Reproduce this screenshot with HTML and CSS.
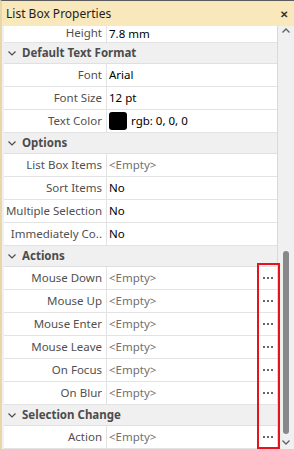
FILE: index.html
```html
<!DOCTYPE html>
<html lang="en">
<head>
  <meta charset="UTF-8">
  <title>List Box Properties</title>
  <link rel="stylesheet" href="styles.css">
</head>
<body>
  <div class="panel">
    <div class="titlebar">
      <span class="title">List Box Properties</span>
      <span class="close">&#x2715;</span>
    </div>
    <div class="body">
      <div class="grid">
        <div class="row first">
          <div class="name">Height</div>
          <div class="value">7.8 mm</div>
        </div>

        <div class="cat"><svg class="chev" width="8" height="5" viewBox="0 0 8 5"><path d="M0.5 0.5 L4 4 L7.5 0.5" /></svg>Default Text Format</div>
        <div class="row">
          <div class="name">Font</div>
          <div class="value">Arial</div>
        </div>
        <div class="row">
          <div class="name">Font Size</div>
          <div class="value">12 pt</div>
        </div>
        <div class="row">
          <div class="name">Text Color</div>
          <div class="value"><span class="swatch"></span>rgb: 0, 0, 0</div>
        </div>

        <div class="cat"><svg class="chev" width="8" height="5" viewBox="0 0 8 5"><path d="M0.5 0.5 L4 4 L7.5 0.5" /></svg>Options</div>
        <div class="row">
          <div class="name">List Box Items</div>
          <div class="value empty">&lt;Empty&gt;</div>
        </div>
        <div class="row">
          <div class="name">Sort Items</div>
          <div class="value">No</div>
        </div>
        <div class="row">
          <div class="name">Multiple Selection</div>
          <div class="value">No</div>
        </div>
        <div class="row">
          <div class="name">Immediately Co..</div>
          <div class="value">No</div>
        </div>

        <div class="cat"><svg class="chev" width="8" height="5" viewBox="0 0 8 5"><path d="M0.5 0.5 L4 4 L7.5 0.5" /></svg>Actions</div>
        <div class="row">
          <div class="name">Mouse Down</div>
          <div class="value empty">&lt;Empty&gt;</div>
          <div class="btn"><svg width="10" height="2"><rect x="0" width="2" height="2"/><rect x="4" width="2" height="2"/><rect x="8" width="2" height="2"/></svg></div>
        </div>
        <div class="row">
          <div class="name">Mouse Up</div>
          <div class="value empty">&lt;Empty&gt;</div>
          <div class="btn"><svg width="10" height="2"><rect x="0" width="2" height="2"/><rect x="4" width="2" height="2"/><rect x="8" width="2" height="2"/></svg></div>
        </div>
        <div class="row">
          <div class="name">Mouse Enter</div>
          <div class="value empty">&lt;Empty&gt;</div>
          <div class="btn"><svg width="10" height="2"><rect x="0" width="2" height="2"/><rect x="4" width="2" height="2"/><rect x="8" width="2" height="2"/></svg></div>
        </div>
        <div class="row">
          <div class="name">Mouse Leave</div>
          <div class="value empty">&lt;Empty&gt;</div>
          <div class="btn"><svg width="10" height="2"><rect x="0" width="2" height="2"/><rect x="4" width="2" height="2"/><rect x="8" width="2" height="2"/></svg></div>
        </div>
        <div class="row">
          <div class="name">On Focus</div>
          <div class="value empty">&lt;Empty&gt;</div>
          <div class="btn"><svg width="10" height="2"><rect x="0" width="2" height="2"/><rect x="4" width="2" height="2"/><rect x="8" width="2" height="2"/></svg></div>
        </div>
        <div class="row">
          <div class="name">On Blur</div>
          <div class="value empty">&lt;Empty&gt;</div>
          <div class="btn"><svg width="10" height="2"><rect x="0" width="2" height="2"/><rect x="4" width="2" height="2"/><rect x="8" width="2" height="2"/></svg></div>
        </div>

        <div class="cat"><svg class="chev" width="8" height="5" viewBox="0 0 8 5"><path d="M0.5 0.5 L4 4 L7.5 0.5" /></svg>Selection Change</div>
        <div class="row">
          <div class="name">Action</div>
          <div class="value empty">&lt;Empty&gt;</div>
          <div class="btn"><svg width="10" height="2"><rect x="0" width="2" height="2"/><rect x="4" width="2" height="2"/><rect x="8" width="2" height="2"/></svg></div>
        </div>
      </div>
      <div class="scrollbar">
        <svg class="arrow" width="8" height="5" viewBox="0 0 8 5"><path d="M0.5 4.5 L4 1 L7.5 4.5" /></svg>
        <div class="track"><div class="thumb"></div></div>
        <svg class="arrow" width="8" height="5" viewBox="0 0 8 5"><path d="M0.5 0.5 L4 4 L7.5 0.5" /></svg>
      </div>
    </div>
    <div class="highlight"></div>
  </div>
</body>
</html>
```

FILE: styles.css
```css
body {
  margin: 0;
  background: #ffffff;
  font-family: "Noto Sans", "Open Sans", sans-serif;
  font-size: 11.5px;
}
.panel {
  position: relative;
  width: 294px;
  height: 449px;
  box-sizing: border-box;
  border-top: 1px solid #5c5c5c;
  border-left: 2px solid #e7d7a9;
  overflow: hidden;
  display: flex;
  flex-direction: column;
}
.titlebar {
  height: 25px;
  background: #f9e8bb;
  display: flex;
  align-items: center;
  justify-content: space-between;
  padding: 0 6px 0 4px;
  color: #1e1e1e;
  font-size: 12px;
}
.close {
  font-size: 10px;
  font-weight: bold;
  color: #333;
}
.body {
  flex: 1;
  display: flex;
  min-height: 0;
  background: #f0f0f0;
}
.grid {
  flex: 1;
  margin-left: 2px;
  border-right: 1px solid #d9d9d9;
  overflow: hidden;
  background: #f0f0f0;
}
.row {
  display: flex;
  height: 22px;
  border-bottom: 1px solid #e3e3e3;
  background: #ffffff;
  line-height: 22px;
}
.row.first {
  height: 16px;
  line-height: 14px;
}
.name {
  width: 98px;
  padding-right: 4px;
  border-right: 1px solid #e3e3e3;
  text-align: right;
  color: #505050;
  white-space: nowrap;
}
.value {
  flex: 1;
  padding-left: 2px;
  color: #000;
  display: flex;
  align-items: center;
  white-space: nowrap;
}
.value.empty {
  color: #707070;
}
.swatch {
  width: 18px;
  height: 18px;
  border-radius: 3px;
  background: #000;
  margin-right: 4px;
}
.btn {
  width: 18px;
  border-left: 1px solid #e3e3e3;
  display: flex;
  align-items: center;
  justify-content: center;
}
.btn svg {
  fill: #666;
}
.cat {
  height: 20px;
  line-height: 20px;
  border-bottom: 1px solid #e0e0e0;
  background: #f0f0f0;
  font-weight: bold;
  font-size: 11.5px;
  color: #4c4c4c;
  display: flex;
  align-items: center;
}
.chev {
  margin: 0 6px 0 4px;
  fill: none;
  stroke: #4c4c4c;
  stroke-width: 1.2;
}
.scrollbar {
  width: 16px;
  display: flex;
  flex-direction: column;
  align-items: center;
  padding: 2px 0 4px;
}
.arrow {
  fill: none;
  stroke: #606060;
  stroke-width: 1.3;
}
.track {
  flex: 1;
  width: 6px;
  display: flex;
  flex-direction: column;
  justify-content: flex-end;
  padding: 4px 0 6px;
}
.thumb {
  height: 183px;
  background: #888888;
  border-radius: 3px;
}
.highlight {
  position: absolute;
  left: 255px;
  top: 262px;
  width: 19px;
  height: 182px;
  border: 2px solid #e3141c;
}
```
